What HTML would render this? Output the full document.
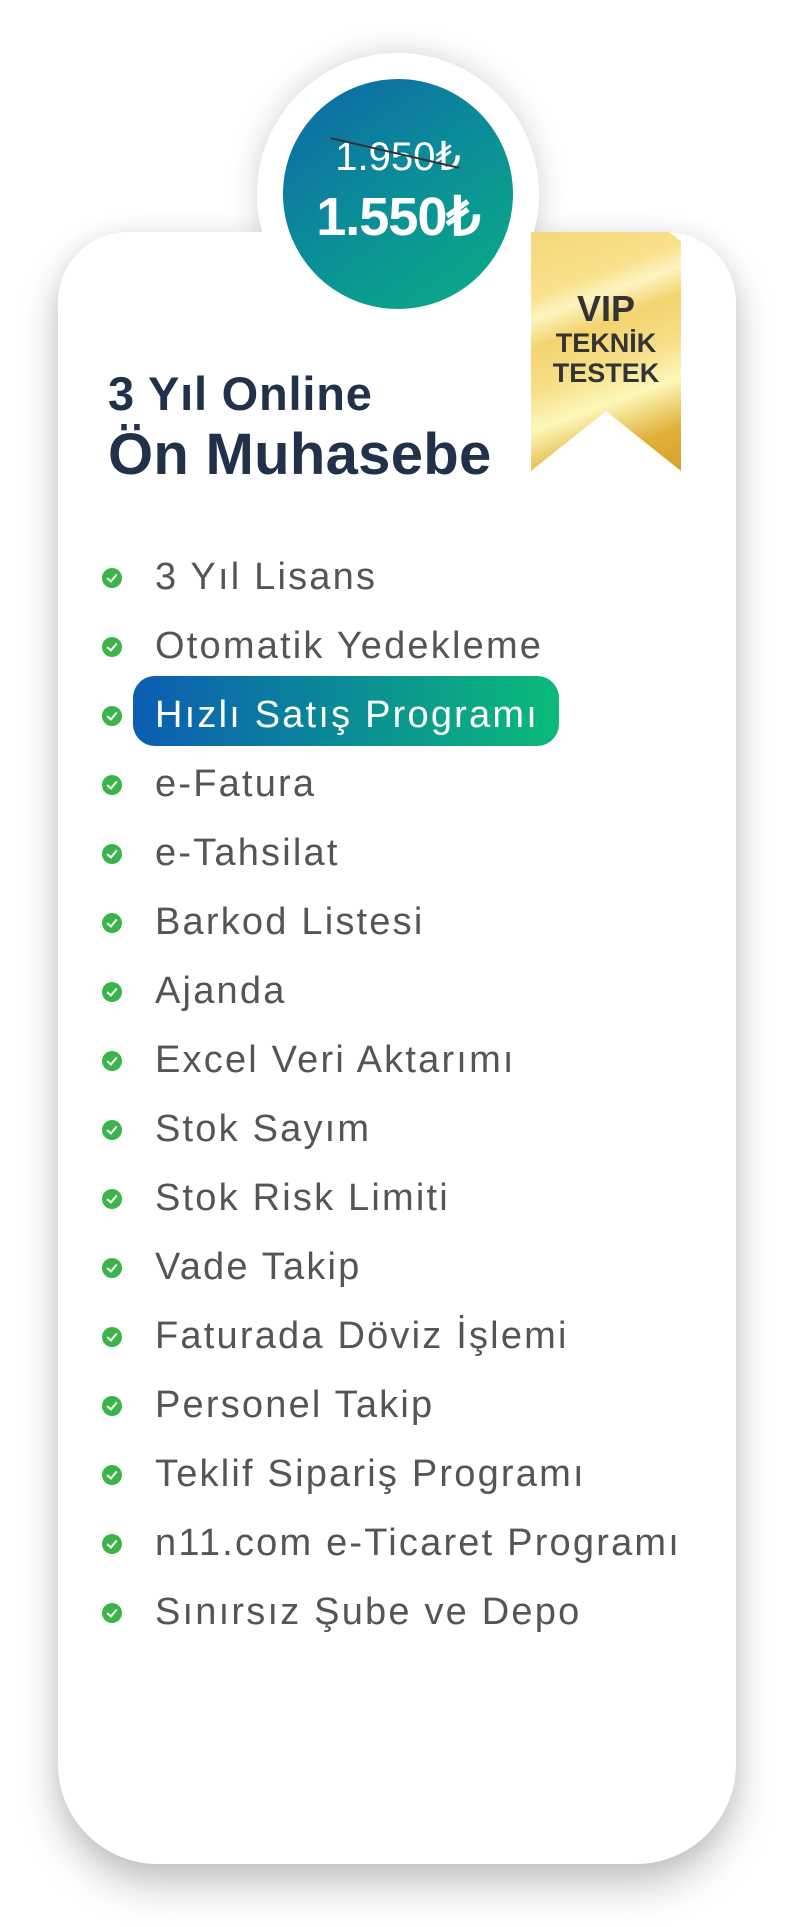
<!DOCTYPE html>
<html><head><meta charset="utf-8"><style>
html,body{margin:0;padding:0;background:#fff;}
body{width:793px;height:1927px;position:relative;overflow:hidden;font-family:"Liberation Sans",sans-serif;}
.ring{position:absolute;left:257px;top:53px;width:282px;height:282px;border-radius:50%;background:#fff;box-shadow:0 0 30px rgba(0,0,0,.18);}
.card{position:absolute;left:58px;top:232px;width:678px;height:1632px;background:#fff;border-radius:70px 70px 100px 100px;box-shadow:0 22px 40px rgba(0,0,0,.22),0 0 25px rgba(0,0,0,.08);}
.cover{position:absolute;left:257px;top:53px;width:282px;height:282px;border-radius:50%;background:#fff;}
.price{position:absolute;left:283px;top:79px;width:230px;height:230px;border-radius:50%;background:linear-gradient(145deg,#0d66a8 0%,#0b8e98 50%,#0aae82 100%);color:#fff;text-align:center;}
.old{position:absolute;top:55px;left:0;width:100%;font-size:40px;letter-spacing:0px;}
.strike{position:absolute;left:46px;top:73px;width:132px;height:2px;background:#333;transform:rotate(13deg);}
.new{position:absolute;top:106px;left:0;width:100%;font-size:54px;font-weight:bold;letter-spacing:-1px;}
.rib{position:absolute;left:531px;top:232px;width:150px;height:239px;background:linear-gradient(160deg,#f5d77a 0%,#f8e08a 22%,#fdf4c0 30%,#f3d36e 40%,#f6df8a 55%,#fcf8b8 68%,#e0b03a 85%,#d4a22a 100%);clip-path:polygon(0 0,92% 0,100% 4%,100% 100%,50% 75%,0 100%);}
.rib div{position:absolute;left:0;width:100%;text-align:center;color:#333;font-weight:bold;}
.t1{position:absolute;left:108px;top:366px;font-size:47px;font-weight:bold;color:#22314a;letter-spacing:0.8px;}
.t2{position:absolute;left:108px;top:421px;font-size:58px;font-weight:bold;color:#22314a;letter-spacing:0.3px;}
ul{position:absolute;left:0;top:543px;margin:0;padding:0;list-style:none;}
li{position:relative;height:69px;line-height:69px;}
li .ic{position:absolute;left:102px;top:25px;width:20px;height:20px;border-radius:50%;background:#3bb54a;}
li .ic:after{content:"";position:absolute;left:7px;top:4px;width:4px;height:8px;border:solid #fff;border-width:0 2.5px 2.5px 0;transform:rotate(40deg);}
li span{position:absolute;left:155px;white-space:nowrap;font-size:38px;color:#555;letter-spacing:2.2px;}
.hl{position:absolute;left:133px;top:676px;width:426px;height:70px;border-radius:22px;background:linear-gradient(90deg,#0b5db3,#0abb78);}
li.w span{color:#fff;}
</style></head><body>
<div class="ring"></div>
<div class="card"></div>
<div class="cover" style="clip-path:inset(0 0 100px 0)"></div>
<div class="price"><div class="old">1.950₺</div><div class="strike"></div><div class="new">1.550₺</div></div>
<div class="rib"><div style="top:56px;font-size:36px">VIP</div><div style="top:96px;font-size:27px">TEKNİK</div><div style="top:126px;font-size:27px">TESTEK</div></div>
<div class="t1">3 Yıl Online</div>
<div class="t2">Ön Muhasebe</div>
<div class="hl"></div>
<ul>
<li><i class="ic"></i><span>3 Yıl Lisans</span></li>
<li><i class="ic"></i><span>Otomatik Yedekleme</span></li>
<li class="w"><i class="ic"></i><span>Hızlı Satış Programı</span></li>
<li><i class="ic"></i><span>e-Fatura</span></li>
<li><i class="ic"></i><span>e-Tahsilat</span></li>
<li><i class="ic"></i><span>Barkod Listesi</span></li>
<li><i class="ic"></i><span>Ajanda</span></li>
<li><i class="ic"></i><span>Excel Veri Aktarımı</span></li>
<li><i class="ic"></i><span>Stok Sayım</span></li>
<li><i class="ic"></i><span>Stok Risk Limiti</span></li>
<li><i class="ic"></i><span>Vade Takip</span></li>
<li><i class="ic"></i><span>Faturada Döviz İşlemi</span></li>
<li><i class="ic"></i><span>Personel Takip</span></li>
<li><i class="ic"></i><span>Teklif Sipariş Programı</span></li>
<li><i class="ic"></i><span>n11.com e-Ticaret Programı</span></li>
<li><i class="ic"></i><span>Sınırsız Şube ve Depo</span></li>
</ul>
</body></html>
